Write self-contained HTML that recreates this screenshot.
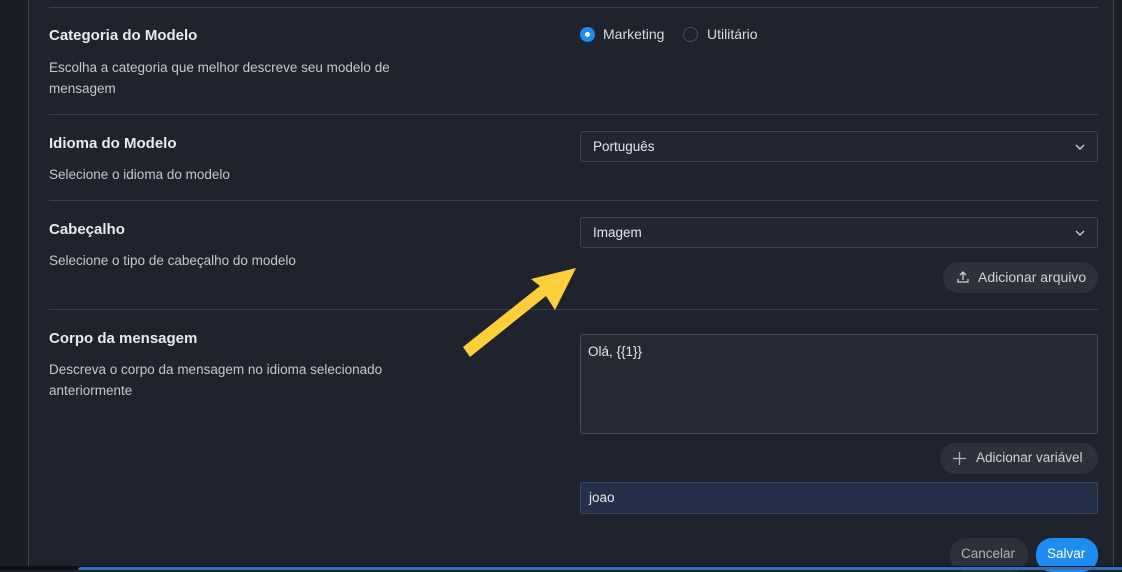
<!DOCTYPE html>
<html><head><meta charset="utf-8"><style>
*{box-sizing:border-box;margin:0;padding:0}
body{width:1122px;height:570px;overflow:hidden;background:#1f232d;font-family:"Liberation Sans",sans-serif;color:#e4e6eb;position:relative}
.lstrip{position:absolute;left:0;top:0;width:29px;height:570px;background:#1b1e27;border-right:1px solid #3d4250}
.rstrip{position:absolute;left:1113px;top:0;width:9px;height:570px;background:#1b1e27;border-left:1px solid #3d4250}
.hr{position:absolute;left:49px;width:1049px;height:1px;background:#3a3f4c}
.t{position:absolute;font-size:15px;font-weight:bold;color:#e8eaee}
.d{position:absolute;font-size:13.5px;color:#c3c7cf;line-height:21px}
.sel{position:absolute;left:580px;width:518px;height:31px;border:1px solid #3e4454;border-radius:3px;background:#232733;font-size:13.5px;padding:7px 12px;color:#e4e6eb}
.sel svg{position:absolute;right:12px;top:12px}
.btn{position:absolute;height:31px;border-radius:16px;background:#2c313c;font-size:13.5px;color:#d0d3da;padding:7px 12px;white-space:nowrap}
</style></head><body>
<div class="lstrip"></div><div class="rstrip"></div>
<div class="hr" style="top:7px"></div>
<div class="t" style="left:49px;top:27px">Categoria do Modelo</div>
<div class="d" style="left:49px;top:57px;width:360px">Escolha a categoria que melhor descreve seu modelo de mensagem</div>
<div style="position:absolute;left:580px;top:27px;width:15px;height:15px;border-radius:50%;background:#1f8cf0"><div style="position:absolute;left:5px;top:5px;width:5px;height:5px;border-radius:50%;background:#fff"></div></div>
<div class="d" style="left:603px;top:24px;color:#d8dbe1;font-size:14px">Marketing</div>
<div style="position:absolute;left:683px;top:27px;width:15px;height:15px;border-radius:50%;border:1px solid #4a505e"></div>
<div class="d" style="left:707px;top:24px;color:#d8dbe1;font-size:14px">Utilitário</div>
<div class="hr" style="top:114px"></div>
<div class="t" style="left:49px;top:135px">Idioma do Modelo</div>
<div class="d" style="left:49px;top:164px">Selecione o idioma do modelo</div>
<div class="sel" style="top:131px">Português<svg width="10" height="6"><path d="M1 1l4 4 4-4" stroke="#cfd2d8" stroke-width="1.4" fill="none"/></svg></div>
<div class="hr" style="top:200px"></div>
<div class="t" style="left:49px;top:221px">Cabeçalho</div>
<div class="d" style="left:49px;top:250px">Selecione o tipo de cabeçalho do modelo</div>
<div class="sel" style="top:217px">Imagem<svg width="10" height="6"><path d="M1 1l4 4 4-4" stroke="#cfd2d8" stroke-width="1.4" fill="none"/></svg></div>
<div class="btn" style="left:943px;top:262px;width:155px;padding-left:35px;padding-right:0;font-size:14px">Adicionar arquivo
<svg style="position:absolute;left:13px;top:8px" width="14" height="14" viewBox="0 0 14 14"><path d="M7 10V2M4 5l3-3 3 3M2 9v3h10V9" stroke="#cfd2d8" stroke-width="1.3" fill="none"/></svg></div>
<div class="hr" style="top:309px"></div>
<div class="t" style="left:49px;top:330px">Corpo da mensagem</div>
<div class="d" style="left:49px;top:359px;width:360px">Descreva o corpo da mensagem no idioma selecionado anteriormente</div>
<div style="position:absolute;left:580px;top:334px;width:518px;height:100px;border:1px solid #4a505e;border-radius:3px;background:#252a35;font-size:13.5px;padding:9px 7px">Olá, {{1}}</div>
<div class="btn" style="left:940px;top:443px;width:158px;padding-left:36px;padding-right:0">Adicionar variável
<svg style="position:absolute;left:13px;top:9px" width="13" height="13"><path d="M6.5 0v13M0 6.5h13" stroke="#aeb2ba" stroke-width="1.3"/></svg></div>
<div style="position:absolute;left:580px;top:482px;width:518px;height:32px;border:1px solid #3a4560;border-radius:2px;background:#253149;font-size:13.5px;padding:7px 8px">joao</div>
<div class="btn" style="left:950px;top:538px;width:78px;height:34px;color:#aeb2ba;padding:8px 11px">Cancelar</div>
<div class="btn" style="left:1036px;top:538px;width:62px;height:34px;background:#1f8cf0;color:#fff;padding:8px 11px">Salvar</div>
<div style="position:absolute;left:0;top:566px;width:1122px;height:4px;background:#0d0f14"></div>
<div style="position:absolute;left:78px;top:567px;width:1044px;height:3px;background:#2d6fb8;border-radius:3px 0 0 0"></div>
<svg style="position:absolute;left:0;top:0" width="1122" height="570"><path d="M576 268L531 279L540 286L463 347L470 357L546 296L555 310Z" fill="#fdd03b"/></svg>
</body></html>
